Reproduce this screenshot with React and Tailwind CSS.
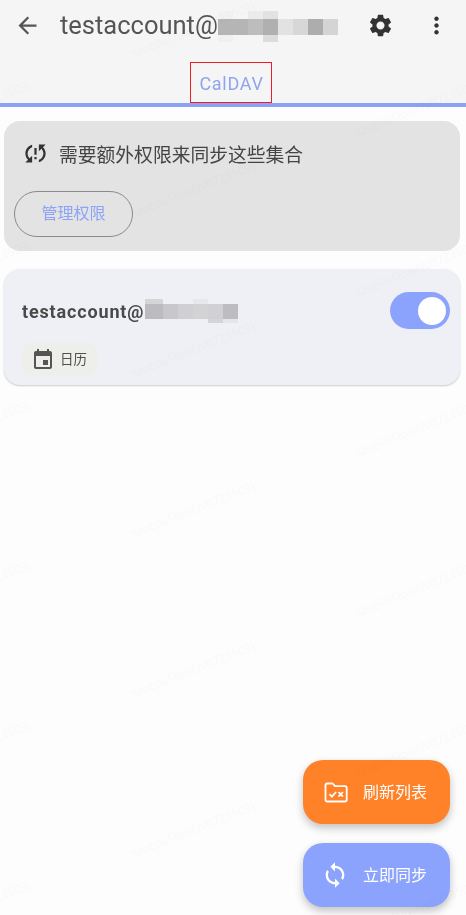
const MARKS = [
  [-89, 139], [-89, 299], [-89, 459], [-89, 619], [-89, 779], [-89, 939],
  [135, 60], [135, 220], [135, 380], [135, 540], [135, 700], [135, 860],
  [359, 139], [359, 299], [359, 459], [359, 619], [359, 779], [359, 939],
];

const TITLE_BLUR = [
  ['bg-[#f2f2f2]', 'bg-transparent', 'bg-[#ebebeb]', 'bg-[#e2e2e2]', 'bg-transparent', 'bg-transparent', 'bg-transparent', 'bg-transparent'],
  ['bg-[#b5b5b5]', 'bg-[#b5b5b5]', 'bg-[#bdbdbd]', 'bg-[#b0b0b0]', 'bg-[#e2e2e2]', 'bg-[#d7d7d7]', 'bg-[#adadad]', 'bg-[#d4d4d4]'],
  ['bg-[#f0f0f0]', 'bg-transparent', 'bg-transparent', 'bg-[#dcdcdc]', 'bg-transparent', 'bg-transparent', 'bg-transparent', 'bg-transparent'],
];

const NAME_BLUR = [
  ['bg-[#d5d5d8]', 'bg-transparent', 'bg-transparent', 'bg-[#e8e8ec]', 'bg-transparent', 'bg-transparent'],
  ['bg-[#bcbcc0]', 'bg-[#c8c8cc]', 'bg-[#d0d0d4]', 'bg-[#d3d3d6]', 'bg-[#d1d1d5]', 'bg-[#bdbdc1]'],
  ['bg-transparent', 'bg-transparent', 'bg-transparent', 'bg-transparent', 'bg-[#d5d5d9]', 'bg-[#e6e6ea]'],
];

function Icon({ d, className }) {
  return (
    <svg viewBox="0 0 24 24" fill="currentColor" className={className}>
      <path d={d} />
    </svg>
  );
}

const arrowBack = 'M20 11H7.83l5.59-5.59L12 4l-8 8 8 8 1.41-1.41L7.83 13H20v-2z';
const settings = 'M19.14 12.94c.04-.3.06-.61.06-.94 0-.32-.02-.64-.07-.94l2.03-1.58c.18-.14.23-.41.12-.61l-1.92-3.32c-.12-.22-.37-.29-.59-.22l-2.39.96c-.5-.38-1.03-.7-1.62-.94l-.36-2.54c-.04-.24-.24-.41-.48-.41h-3.84c-.24 0-.43.17-.47.41l-.36 2.54c-.59.24-1.13.57-1.62.94l-2.39-.96c-.22-.08-.47 0-.59.22L2.74 8.87c-.12.21-.08.47.12.61l2.03 1.58c-.05.3-.09.63-.09.94s.02.64.07.94l-2.03 1.58c-.18.14-.23.41-.12.61l1.92 3.32c.12.22.37.29.59.22l2.39-.96c.5.38 1.03.7 1.62.94l.36 2.54c.05.24.24.41.48.41h3.84c.24 0 .44-.17.47-.41l.36-2.54c.59-.24 1.13-.56 1.62-.94l2.39.96c.22.08.47 0 .59-.22l1.92-3.32c.12-.22.07-.47-.12-.61l-2.01-1.58zM12 15.6c-1.98 0-3.6-1.62-3.6-3.6s1.62-3.6 3.6-3.6 3.6 1.62 3.6 3.6-1.62 3.6-3.6 3.6z';
const moreVert = 'M12 8c1.1 0 2-.9 2-2s-.9-2-2-2-2 .9-2 2 .9 2 2 2zm0 2c-1.1 0-2 .9-2 2s.9 2 2 2 2-.9 2-2-.9-2-2-2zm0 6c-1.1 0-2 .9-2 2s.9 2 2 2 2-.9 2-2-.9-2-2-2z';
const syncProblem = 'M3 12c0 2.21.91 4.2 2.36 5.64L3 20h6v-6l-2.24 2.24C5.68 15.15 5 13.66 5 12c0-2.61 1.67-4.83 4-5.65V4.26C5.55 5.15 3 8.27 3 12zm8 5h2v-2h-2v2zM21 4h-6v6l2.24-2.24C18.32 8.85 19 10.34 19 12c0 2.61-1.67 4.83-4 5.65v2.09c3.45-.89 6-4.01 6-7.74 0-2.21-.91-4.2-2.36-5.64L21 4zm-10 9h2V7h-2v6z';
const event = 'M17 12h-5v5h5v-5zM16 1v2H8V1H6v2H5c-1.11 0-1.99.9-1.99 2L3 19c0 1.1.89 2 2 2h14c1.1 0 2-.9 2-2V5c0-1.1-.9-2-2-2h-1V1h-2zm3 18H5V8h14v11z';
const sync = 'M12 4V1L8 5l4 4V6c3.31 0 6 2.69 6 6 0 1.01-.25 1.97-.7 2.8l1.46 1.46C19.54 15.03 20 13.57 20 12c0-4.42-3.58-8-8-8zm0 14c-3.31 0-6-2.69-6-6 0-1.01.25-1.97.7-2.8L5.24 7.74C4.46 8.97 4 10.43 4 12c0 4.42 3.58 8 8 8v3l4-4-4-4v3z';

function FolderCheck({ className }) {
  return (
    <svg viewBox="0 0 24 21" fill="none" stroke="currentColor" strokeWidth="1.8" className={className}>
      <path d="M1.5 3.2c0-1 .7-1.7 1.7-1.7h5.4l2.4 2.6h10c1 0 1.7.7 1.7 1.7v12c0 1-.7 1.7-1.7 1.7H3.2c-1 0-1.7-.7-1.7-1.7z" strokeLinejoin="round" />
      <path d="M5.5 12.2l2.4 2.4 4.2-4.6" />
      <path d="M14.5 10l4.4 4.6M18.9 10l-4.4 4.6" />
    </svg>
  );
}

// mosaic over the redacted part of an address
function Blur({ rows, className }) {
  return (
    <div className={className}>
      {rows.map((row, i) =>
        row.map((cell, j) => <div key={`${i}-${j}`} className={cell} />)
      )}
    </div>
  );
}

function Fab({ color, icon, label }) {
  return (
    <div className={`w-[147px] h-[64px] rounded-[20px] flex items-center pl-[18px] text-white shadow-[0_4px_9px_rgba(0,0,0,0.24)] ${color}`}>
      {icon}
      <span className="ml-[14px] mt-[1px] text-[16px] leading-none">{label}</span>
    </div>
  );
}

export default function App() {
  return (
    <div className="relative w-full h-[915px] overflow-hidden blur-[0.4px] bg-[#fdfdfd] text-[#454545] font-['Roboto','Noto_Sans_CJK_SC',sans-serif]">
      <div className="bg-[#f5f5f5]">
        <div className="h-[50px] flex items-center pl-[14px] pr-[16px]">
          <Icon d={arrowBack} className="w-[27px] h-[27px] text-[#555555]" />
          <div className="relative ml-[19px] flex-1 h-full flex items-center">
            <span className="text-[25.5px] leading-none mt-[1px] text-[#555555]">testaccount@e</span>
            <Blur rows={TITLE_BLUR} className="absolute left-[158px] top-[11px] grid grid-cols-[repeat(8,15px)] grid-rows-[8px_16px_7px]" />
          </div>
          <Icon d={settings} className="w-[27px] h-[27px] text-[#333333]" />
          <Icon d={moreVert} className="ml-[29px] w-[27px] h-[27px] text-[#333333]" />
        </div>
        <div className="relative h-[53px] pt-[13px] flex items-center justify-center">
          <span className="text-[18px] tracking-[0.7px] -ml-[3px] text-[#8fa5ee]">CalDAV</span>
          <div className="absolute left-[190px] top-[12px] w-[82px] h-[41px] border border-[#ee1c25]" />
        </div>
      </div>
      <div className="h-[4px] bg-[#8ca3f5]" />

      <div className="px-[4px] pr-[6px] pt-[14px]">
        <div className="h-[130px] rounded-[16px] bg-[#e3e3e3] pt-[19px]">
          <div className="flex items-center pl-[18px]">
            <Icon d={syncProblem} className="w-[27px] h-[27px] text-[#333333]" />
            <span className="ml-[10px] mt-[5px] text-[18.8px] leading-none text-[#444444]">需要额外权限来同步这些集合</span>
          </div>
          <div className="ml-[10px] mt-[24px] w-[119px] h-[46px] rounded-[23px] border-[1.5px] border-[#8a8a8a] flex items-center justify-center text-[16px] text-[#8ca3f8]">
            管理权限
          </div>
        </div>

        <div className="mt-[18px] h-[116px] rounded-[16px] bg-[#eff0f5] shadow-[0_1px_2px_rgba(0,0,0,0.2)] pt-[23px] pl-[18px] pr-[10px]">
          <div className="flex items-center h-[37px]">
            <div className="relative flex-1 h-full flex items-center">
              <span className="text-[18px] font-bold tracking-[0.85px] leading-none mt-[2px] text-[#4a4a4a]">testaccount@</span>
              <Blur rows={NAME_BLUR} className="absolute left-[123px] top-[7px] grid grid-cols-[18px_repeat(5,15px)] grid-rows-[5px_15px_4px]" />
            </div>
            <div className="w-[60px] h-[37px] rounded-full bg-[#8ca3fd] flex items-center justify-end pr-[4px]">
              <div className="w-[28px] h-[28px] rounded-full bg-white" />
            </div>
          </div>
          <div className="mt-[14px] w-[75px] h-[33px] rounded-[10px] bg-[#eeeeea] flex items-center pl-[9px]">
            <Icon d={event} className="w-[24px] h-[24px] text-[#555555]" />
            <span className="ml-[5px] text-[13.5px] leading-none text-[#505050]">日历</span>
          </div>
        </div>
      </div>

      <div className="absolute right-[16px] bottom-[8px] flex flex-col gap-[19px]">
        <Fab color="bg-[#ff8128]" icon={<FolderCheck className="ml-[3px] w-[24px] h-[21px] mr-[1px]" />} label="刷新列表" />
        <Fab color="bg-[#8ca3fd]" icon={<Icon d={sync} className="w-[28px] h-[28px]" />} label="立即同步" />
      </div>

      {/* watermark tiled over the whole screen */}
      <div className="absolute inset-0 pointer-events-none">
        {MARKS.map(([x, y]) => (
          <span
            key={`${x}-${y}`}
            className="absolute origin-bottom-left -rotate-[22deg] whitespace-nowrap text-[12px] leading-none text-[rgba(0,0,0,0.022)] font-['Open_Sans',sans-serif]"
            style={{ left: x, top: y - 12 }}
          >
            MobileFlow(WB723509)
          </span>
        ))}
      </div>
    </div>
  );
}
